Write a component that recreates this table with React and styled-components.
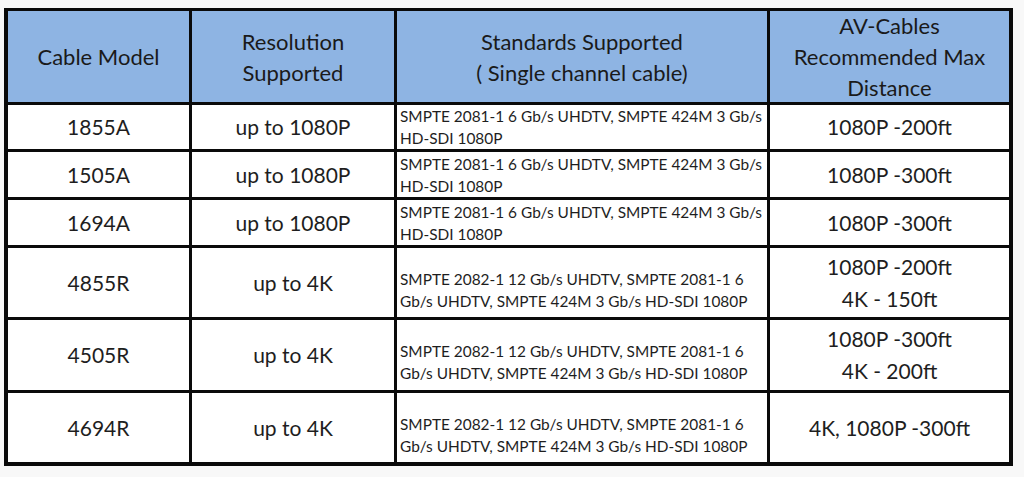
import React from 'react';
import styled, { createGlobalStyle } from 'styled-components';

const GlobalStyle = createGlobalStyle`
  html, body {
    margin: 0;
    padding: 0;
    background: #f8f8f8;
  }
  body {
    font-family: Lato, "Open Sans", "Noto Sans", sans-serif;
    color: #1c1c1c;
  }
`;

const Page = styled.div`
  width: 1024px;
  height: 477px;
  padding: 8px 0 0 4px;
  box-sizing: border-box;
`;

const Grid = styled.div`
  display: grid;
  grid-template-columns: 181px 202px 370px 239px;
  grid-template-rows: 91px 44px 45px 45px 69px 70px 69px;
  gap: 3px;
  width: 1009px;
  box-sizing: border-box;
  padding: 3px 4px 4px 4px;
  background: #0a0a0a;
`;

const HeaderCell = styled.div`
  display: flex;
  align-items: center;
  justify-content: center;
  text-align: center;
  background: #8eb4e3;
  font-size: 22px;
  line-height: 31px;
  color: #1a1a1a;
`;

const Cell = styled.div`
  display: flex;
  align-items: center;
  justify-content: ${p => (p.$left ? 'flex-start' : 'center')};
  text-align: ${p => (p.$left ? 'left' : 'center')};
  background: #ffffff;
  font-size: ${p => (p.$small ? '15.4px' : '21px')};
  line-height: ${p => (p.$small ? '22px' : '32px')};
  padding: ${p => (p.$left ? `${ p.$drop ? 14 : 0 }px 2px 0 3px` : '0')};
  box-sizing: border-box;
  white-space: nowrap;
  color: #1e1e1e;
`;

const headers = [
  [ 'Cable Model' ],
  [ 'Resolution', 'Supported' ],
  [ 'Standards Supported', '( Single channel cable)' ],
  [ 'AV-Cables', 'Recommended Max', 'Distance' ],
];

const hdStd = [ 'SMPTE 2081-1 6 Gb/s UHDTV, SMPTE 424M 3 Gb/s', 'HD-SDI 1080P' ];
const uhdStd = [ 'SMPTE 2082-1 12 Gb/s UHDTV, SMPTE 2081-1 6', 'Gb/s UHDTV, SMPTE 424M 3 Gb/s HD-SDI 1080P' ];

const rows = [
  { model: '1855A', res: 'up to 1080P', std: hdStd, dist: [ '1080P -200ft' ] },
  { model: '1505A', res: 'up to 1080P', std: hdStd, dist: [ '1080P -300ft' ] },
  { model: '1694A', res: 'up to 1080P', std: hdStd, dist: [ '1080P -300ft' ] },
  { model: '4855R', res: 'up to 4K', std: uhdStd, dist: [ '1080P -200ft', '4K - 150ft' ], tall: true },
  { model: '4505R', res: 'up to 4K', std: uhdStd, dist: [ '1080P -300ft', '4K - 200ft' ], tall: true },
  { model: '4694R', res: 'up to 4K', std: uhdStd, dist: [ '4K, 1080P -300ft' ], tall: true },
];

function lines( list ) {
  return <div>{list.map(( l, i ) => <div key={i}>{l}</div> )}</div>;
}

const App = () => (
  <Page>
    <GlobalStyle />
    <Grid>
      {headers.map(( h, i ) => <HeaderCell key={`h_${ i }`}>{lines( h )}</HeaderCell> )}
      {rows.map( row => (
        <React.Fragment key={row.model}>
          <Cell>{row.model}</Cell>
          <Cell>{row.res}</Cell>
          <Cell $left $small $drop={row.tall}>{lines( row.std )}</Cell>
          <Cell>{lines( row.dist )}</Cell>
        </React.Fragment>
      ))}
    </Grid>
  </Page>
);

export default App;
